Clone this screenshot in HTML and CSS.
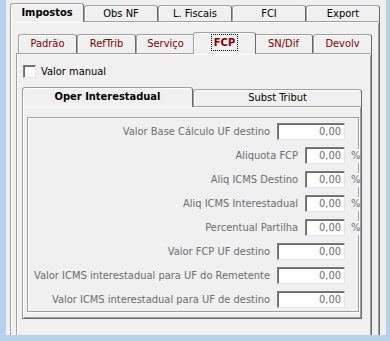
FILE: index.html
```html
<!DOCTYPE html>
<html lang="pt-BR">
<head>
    <meta charset="UTF-8">
    <title>Impostos - FCP</title>
    <link rel="stylesheet" href="styles.css">
</head>
<body>
    <div class="window">
        <div class="tabs outer">
            <div class="tab-row">
                <div class="tab active bold">Impostos</div>
                <div class="tab">Obs NF</div>
                <div class="tab">L. Fiscais</div>
                <div class="tab">FCI</div>
                <div class="tab">Export</div>
            </div>
            <div class="page outer-page">
                <div class="tabs inner">
                    <div class="tab-row">
                        <div class="tab">Padrão</div>
                        <div class="tab">RefTrib</div>
                        <div class="tab">Serviço</div>
                        <div class="tab active bold"><span class="focus">FCP</span></div>
                        <div class="tab">SN/Dif</div>
                        <div class="tab">Devolv</div>
                    </div>
                    <div class="page inner-page">
                        <label class="check">
                            <span class="box"></span>
                            Valor manual
                        </label>

                        <div class="tabs sub">
                            <div class="tab-row">
                                <div class="tab active bold">Oper Interestadual</div>
                                <div class="tab">Subst Tribut</div>
                            </div>
                            <div class="page sub-page">
                                <div class="group">
                                    <div class="row">
                                        <span class="label">Valor Base Cálculo UF destino</span>
                                        <span class="field wide">0,00</span>
                                        <span class="unit"></span>
                                    </div>
                                    <div class="row">
                                        <span class="label">Aliquota FCP</span>
                                        <span class="field">0,00</span>
                                        <span class="unit pct">%</span>
                                    </div>
                                    <div class="row">
                                        <span class="label">Aliq ICMS Destino</span>
                                        <span class="field">0,00</span>
                                        <span class="unit pct">%</span>
                                    </div>
                                    <div class="row">
                                        <span class="label">Aliq ICMS Interestadual</span>
                                        <span class="field">0,00</span>
                                        <span class="unit pct">%</span>
                                    </div>
                                    <div class="row">
                                        <span class="label">Percentual Partilha</span>
                                        <span class="field">0,00</span>
                                        <span class="unit pct">%</span>
                                    </div>
                                    <div class="row">
                                        <span class="label">Valor FCP UF destino</span>
                                        <span class="field wide">0,00</span>
                                        <span class="unit"></span>
                                    </div>
                                    <div class="row">
                                        <span class="label">Valor ICMS interestadual para UF do Remetente</span>
                                        <span class="field wide">0,00</span>
                                        <span class="unit"></span>
                                    </div>
                                    <div class="row">
                                        <span class="label">Valor ICMS interestadual para UF de destino</span>
                                        <span class="field wide">0,00</span>
                                        <span class="unit"></span>
                                    </div>
                                </div>
                            </div>
                        </div>
                    </div>
                </div>
            </div>
        </div>
    </div>
</body>
</html>
```

FILE: styles.css
```css
* {
    margin: 0;
    padding: 0;
    box-sizing: border-box;
}

body {
    background: #b9d1ea;
    font-family: 'DejaVu Sans Condensed', 'Liberation Sans', sans-serif;
    font-size: 11px;
    color: #000;
}

.window {
    margin-left: 6px;
    width: 380px;
    height: 335px;
    background: #f0f0f0;
    overflow: hidden;
    padding: 3px 0 0 4px;
}

/* abas genericas */
.tab-row {
    display: flex;
    align-items: flex-end;
}

.tab {
    background: #f0f0f0;
    border: 1px solid #a0a0a0;
    border-bottom: none;
    border-right-color: #696969;
    border-radius: 3px 3px 0 0;
    box-shadow: inset 1px 1px 0 #fff;
    text-align: center;
    white-space: nowrap;
}

.tab.active {
    position: relative;
    z-index: 1;
    margin-bottom: -1px;
}

.bold {
    font-weight: bold;
}

.page {
    background: #f0f0f0;
    border-top: 1px solid #a0a0a0;
    border-left: 1px solid #a0a0a0;
    border-right: 1px solid #696969;
    box-shadow: inset 1px 1px 0 #fff, inset -1px 0 0 #a0a0a0;
}

/* nivel 1 */
.outer {
    width: 370px;
}

.outer > .tab-row {
    height: 18px;
}

.outer > .tab-row > .tab {
    width: 74px;
    height: 16px;
    line-height: 15px;
}

.outer > .tab-row > .tab.active {
    height: 19px;
    line-height: 17px;
}

.outer-page {
    height: 320px;
    padding: 10px 7px 0 5px;
}

/* nivel 2 */
.inner > .tab-row {
    height: 21px;
    padding-left: 2px;
}

.inner > .tab-row > .tab {
    width: 59px;
    height: 19px;
    line-height: 18px;
    color: #800000;
}

.inner > .tab-row > .tab.active {
    width: 63px;
    height: 22px;
    margin-left: -2px;
    margin-right: -2px;
    line-height: 19px;
}

.focus {
    outline: 1px dotted #000;
    padding: 1px 2px;
}

.inner-page {
    height: 290px;
    padding: 11px 9px 0 5px;
}

.check {
    display: flex;
    align-items: center;
    height: 13px;
    margin-left: 1px;
    margin-bottom: 9px;
    gap: 5px;
}

.box {
    width: 13px;
    height: 13px;
    background: #fff;
    border: 1px solid;
    border-color: #808080 #e3e3e3 #e3e3e3 #808080;
    box-shadow: inset 1px 1px 0 #696969;
}

/* nivel 3 */
.sub > .tab-row {
    height: 19px;
}

.sub > .tab-row > .tab {
    width: 169px;
    height: 17px;
    line-height: 16px;
}

.sub > .tab-row > .tab.active {
    width: 171px;
    height: 20px;
    line-height: 18px;
}

.sub-page {
    border-bottom: 1px solid #696969;
    box-shadow: inset 1px 1px 0 #fff, inset -1px -1px 0 #a0a0a0;
    padding: 10px 2px 6px 4px;
}

.group {
    border: 1px solid #a0a0a0;
    box-shadow: 1px 1px 0 #fff, inset 1px 1px 0 #fff;
    padding: 5px 0 3px;
    display: flex;
    flex-direction: column;
    gap: 7px;
}

.row {
    display: flex;
    align-items: center;
    height: 17px;
}

.label {
    flex: 1;
    text-align: right;
    margin-right: 7px;
    color: #6d6d6d;
    white-space: nowrap;
}

.field {
    width: 40px;
    height: 17px;
    background: #fff;
    border: 1px solid;
    border-color: #808080 #e3e3e3 #e3e3e3 #808080;
    box-shadow: inset 1px 1px 0 #696969;
    color: #6d6d6d;
    text-align: right;
    padding-right: 3px;
    line-height: 15px;
}

.field.wide {
    width: 68px;
}

.unit {
    width: 10px;
    margin-left: 4px;
    margin-right: -1px;
    color: #6d6d6d;
}

.unit.pct {
    background: #f0f0f0;
    padding-left: 2px;
    height: 14px;
    line-height: 14px;
    position: relative;
}
```
